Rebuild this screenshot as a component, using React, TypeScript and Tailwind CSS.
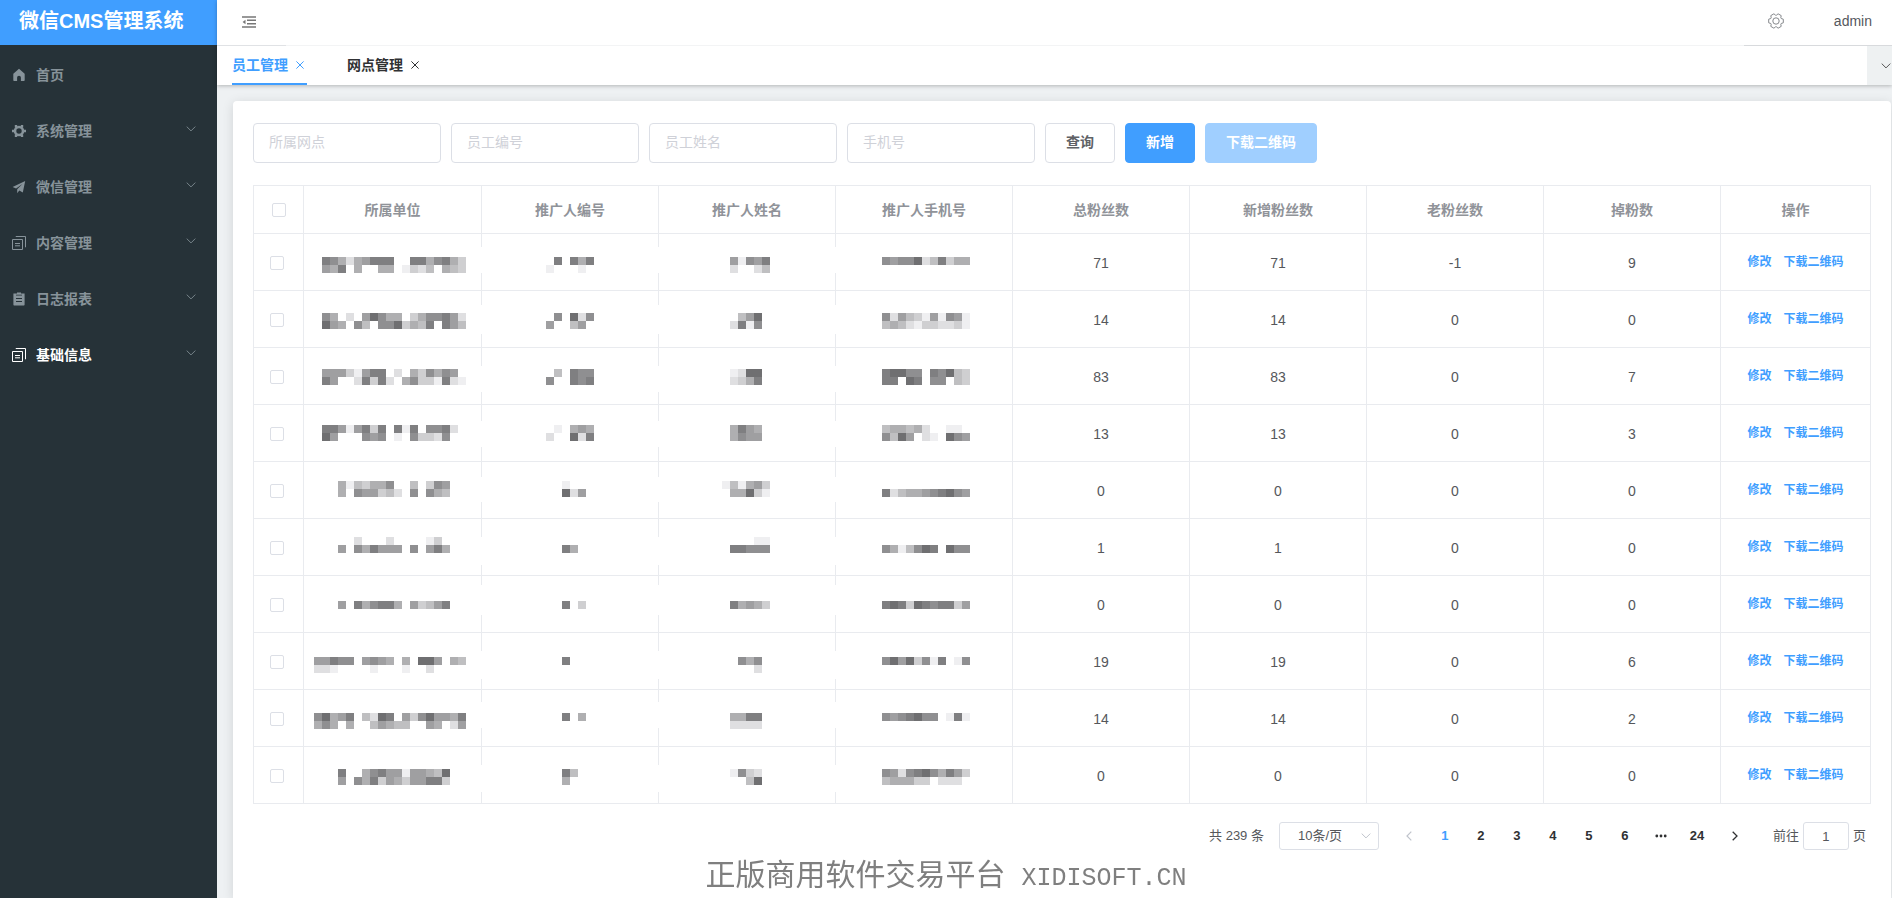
import type { ReactNode } from 'react';

const HomeIcon = () => (
  <svg viewBox="0 0 14 14" className="size-[14px]" fill="currentColor">
    <path d="M7 .8 12.4 5.6c.2.2.3.4.3.6v6.1c0 .5-.4.8-.8.8H8.9V9.6a1.9 1.9 0 0 0-3.8 0v3.5H2.1c-.5 0-.8-.4-.8-.8V6.2c0-.2.1-.4.3-.6z" />
  </svg>
);

const GearIcon = () => (
  <svg viewBox="0 0 14 14" className="size-[14px]" fill="none" stroke="currentColor">
    <circle cx="7" cy="7" r="4" strokeWidth="2.6" />
    <path
      d="M4 1v2.4M10 1v2.4M4 10.6V13M10 10.6V13M0 7h2.4M11.6 7H14"
      strokeWidth="2.4"
    />
  </svg>
);

const SendIcon = () => (
  <svg viewBox="0 0 14 14" className="size-[14px]" fill="currentColor">
    <path d="M13.2 1 .6 7l3.5 1.5L10.4 4 5.2 9.2v4l2.1-2.6 3.5 1.8z" />
  </svg>
);

const CopyIcon = () => (
  <svg viewBox="0 0 14 14" className="size-[14px]" fill="none" stroke="currentColor">
    <path d="M.5 3.5h10v10H.5zM4 1V.5h9.5V11H13M3 7.5h5M3 9.8h5" />
  </svg>
);

const OrderIcon = () => (
  <svg viewBox="0 0 14 14" className="size-[14px]" fill="currentColor">
    <path
      fillRule="evenodd"
      d="M5 .4h4v1.1h3.6v11.3c0 .4-.3.7-.7.7H2.1c-.4 0-.7-.3-.7-.7V1.5H5zM4 2.7v.9h6v-.9zM4 6v.9h6V6zm0 3.1v.9h6v-.9z"
    />
  </svg>
);

const FoldIcon = () => (
  <svg viewBox="0 0 14 12" className="h-3 w-[14px]" fill="none" stroke="currentColor">
    <path d="M0 1h14M5 4.3h9M5 7.7h9M0 11h14" strokeWidth="1.6" />
    <path d="M3.5 3.8v4.4L.6 6z" fill="currentColor" stroke="none" />
  </svg>
);

const SettingIcon = () => (
  <svg viewBox="0 0 16 16" className="size-4" fill="none" stroke="currentColor">
    <circle cx="8" cy="8" r="3.2" />
    <path
      d="M15.3 9.8 13.2 10.5 12.8 11.2 13.2 13.4 10.1 15.2 8.4 13.8H7.6L5.9 15.2 2.8 13.4 3.2 11.2 2.8 10.5.7 9.8V6.2L2.8 5.5 3.2 4.8 2.8 2.6 5.9.8 7.6 2.2H8.4L10.1.8 13.2 2.6 12.8 4.8 13.2 5.5 15.3 6.2z"
      strokeLinejoin="round"
    />
  </svg>
);

const ChevronDown = () => (
  <svg viewBox="0 0 10 6" className="h-[6px] w-[10px]" fill="none" stroke="currentColor">
    <path d="m.7.6 4.3 4.3L9.3.6" />
  </svg>
);

const CloseIcon = () => (
  <svg viewBox="0 0 8 8" className="size-2" fill="none" stroke="currentColor">
    <path d="m.4.4 7.2 7.2M7.6.4.4 7.6" />
  </svg>
);

type MenuItem = { label: string; icon: ReactNode; children?: boolean; active?: boolean };

const menu: MenuItem[] = [
  { label: '首页', icon: <HomeIcon /> },
  { label: '系统管理', icon: <GearIcon />, children: true },
  { label: '微信管理', icon: <SendIcon />, children: true },
  { label: '内容管理', icon: <CopyIcon />, children: true },
  { label: '日志报表', icon: <OrderIcon />, children: true },
  { label: '基础信息', icon: <CopyIcon />, children: true, active: true },
];

const filters = ['所属网点', '员工编号', '员工姓名', '手机号'];

const columns = [
  '所属单位',
  '推广人编号',
  '推广人姓名',
  '推广人手机号',
  '总粉丝数',
  '新增粉丝数',
  '老粉丝数',
  '掉粉数',
];

// left edge of the masked block inside each private column
const maskLeft = [10, 64, 63, 46];

// masks: two strips per private column, one digit per 8px block, 0 = empty, 9 = darkest
// gap: where the column line is wiped out, [top, height]
type Row = { top: number; gap: [number, number]; masks: [string, string][]; values: number[] };

const rows: Row[] = [
  {
    top: 23,
    gap: [13, 26],
    masks: [
      ['0875256888008857853', '0658050055013240543'],
      ['080858', '100010'],
      ['061768', '020024'],
      ['76779248355', ''],
    ],
    values: [71, 71, -1, 9],
  },
  {
    top: 22,
    gap: [14, 29],
    masks: [
      ['0750206975503577862', '0965074077935480864'],
      ['070927', '600460'],
      ['004690', '028170'],
      ['72643161761', '45421332231'],
    ],
    values: [14, 14, 0, 0],
  },
  {
    top: 21,
    gap: [18, 26],
    masks: [
      ['0666316880205375760', '0860028382057331821'],
      ['040877', '700878'],
      ['012990', '023580'],
      ['89977087943', '88098077043'],
    ],
    values: [83, 83, 0, 7],
  },
  {
    top: 20,
    gap: [16, 26],
    masks: [
      ['0886168380818077820', '0960007670107332700'],
      ['010565', '200928'],
      ['058650', '057660'],
      ['45545200110', '74960210976'],
    ],
    values: [13, 13, 0, 3],
  },
  {
    top: 19,
    gap: [15, 25],
    masks: [
      ['0005143557004037600', '0005076634207075400'],
      ['001000', '009260'],
      ['141563', '055931'],
      ['', '82455678976'],
    ],
    values: [0, 0, 0, 0],
  },
  {
    top: 18,
    gap: [18, 28],
    masks: [
      ['0000020002000013000', '0006075866607068500'],
      ['', '008500'],
      ['000011', '088777'],
      ['', '75147980977'],
    ],
    values: [1, 1, 0, 0],
  },
  {
    top: 25,
    gap: [9, 30],
    masks: [
      ['0006085788506346800', ''],
      ['008030', ''],
      ['085653', ''],
      ['89839878836', ''],
    ],
    values: [0, 0, 0, 0],
  },
  {
    top: 24,
    gap: [18, 28],
    masks: [
      ['6687706765050996054', '2210000100010020000'],
      ['008000', ''],
      ['007570', '000020'],
      ['79693718017', ''],
    ],
    values: [19, 19, 0, 6],
  },
  {
    top: 23,
    gap: [12, 26],
    masks: [
      ['7956804298063796658', '5750500465440065026'],
      ['008050', ''],
      ['055880', '022220'],
      ['76789770181', ''],
    ],
    values: [14, 14, 0, 2],
  },
  {
    top: 22,
    gap: [18, 27],
    masks: [
      ['0008005786616654900', '0006075836536688300'],
      ['008400', '005000'],
      ['017320', '000490'],
      ['76278975863', '45553302220'],
    ],
    values: [0, 0, 0, 0],
  },
];

const Mosaic = ({ row, col }: { row: Row; col: number }) => (
  <svg
    className="block h-14 w-44 overflow-visible"
    shapeRendering="crispEdges"
    aria-hidden="true"
  >
    {row.masks[col].map((strip, line) =>
      strip.split('').map((level, i) =>
        level === '0' ? null : (
          <rect
            key={`${line}-${i}`}
            x={maskLeft[col] + i * 8}
            y={row.top + line * 8}
            width="8"
            height="8"
            fill={`rgb(${255 - Number(level) * 16} ${255 - Number(level) * 16} ${257 - Number(level) * 16})`}
          />
        ),
      ),
    )}
    {col < 3 && <rect x="175" y={row.gap[0]} width="4" height={row.gap[1]} fill="#fff" />}
  </svg>
);

const Sidebar = () => (
  <aside className="w-[217px] shrink-0 bg-[#263238]">
    <h1 className="flex h-[45px] items-center bg-[#409eff] pb-[3px] pl-[19px] text-xl font-bold text-white">
      微信CMS管理系统
    </h1>
    <nav className="pt-[2px]">
      {menu.map((item) => (
        <a
          key={item.label}
          href="#"
          className={`flex h-14 items-center gap-[10px] pr-[21px] pl-3 text-sm font-bold ${
            item.active ? 'text-white' : 'text-[#87939a]'
          }`}
        >
          {item.icon}
          <span className="flex-1">{item.label}</span>
          {item.children && (
            <span className="pb-1 text-[#77848a]">
              <ChevronDown />
            </span>
          )}
        </a>
      ))}
    </nav>
  </aside>
);

const Header = () => (
  <header className="relative z-10 bg-white shadow-[0_1px_4px_rgba(0,0,0,0.25)]">
    <div className="flex h-[46px] justify-between border-b border-[#f3f4f5]">
      <div className="-mb-px flex w-[69px] items-center border-b border-[#e0e2e5] pb-[2px] pl-[25px] text-[#777]">
        <button type="button" aria-label="折叠菜单">
          <FoldIcon />
        </button>
      </div>
      <div className="-mb-px flex w-[148px] items-center justify-between border-b border-[#d8dadd] pr-5 pb-[3px] pl-6 text-sm text-[#55585e]">
        <button type="button" aria-label="设置" className="text-[#85888c]">
          <SettingIcon />
        </button>
        <span>admin</span>
      </div>
    </div>
    {/* Opened pages */}
    <div className="flex h-[39px] justify-between">
      <div className="flex gap-10 pl-[15px] text-sm font-bold">
        <div className="flex items-center gap-2 border-b-2 border-[#409eff] pr-[3px] text-[#409eff]">
          <a href="#">员工管理</a>
          <button type="button" aria-label="关闭员工管理">
            <CloseIcon />
          </button>
        </div>
        <div className="flex items-center gap-2 border-b-2 border-transparent text-[#303133]">
          <a href="#">网点管理</a>
          <button type="button" aria-label="关闭网点管理">
            <CloseIcon />
          </button>
        </div>
      </div>
      <button
        type="button"
        aria-label="更多"
        className="flex w-[25px] items-center overflow-hidden bg-[#eef1f2] pl-[14px] text-[#555]"
      >
        <span className="shrink-0">
          <ChevronDown />
        </span>
      </button>
    </div>
  </header>
);

const checkboxClass =
  'block mx-auto size-[14px] appearance-none rounded-xs border border-[#dcdfe6] bg-white checked:bg-[#409eff]';

const StaffTable = () => (
  <table className="mt-[22px] w-full table-fixed border-separate border-spacing-0 border-t border-l border-[#e9ebef] text-center text-sm text-[#606266]">
    <thead>
      <tr className="h-12 text-[#909399]">
        <th className="w-[50px] border-r border-b border-[#e9ebef]">
          <input type="checkbox" aria-label="全选" className={checkboxClass} />
        </th>
        {columns.map((column) => (
          <th
            key={column}
            className="border-r border-b border-[#e9ebef] font-bold nth-2:w-[178px]"
          >
            {column}
          </th>
        ))}
        <th className="w-[150px] border-r border-b border-[#e9ebef] font-bold">操作</th>
      </tr>
    </thead>
    <tbody>
      {rows.map((row, index) => (
        <tr key={index} className="h-[57px]">
          <td className="border-r border-b border-[#e9ebef] pt-[2px] pr-1">
            <input type="checkbox" aria-label={`选择第${index + 1}行`} className={checkboxClass} />
          </td>
          {row.masks.map((_, col) => (
            <td key={col} className="border-r border-b border-[#e9ebef]">
              <Mosaic row={row} col={col} />
            </td>
          ))}
          {row.values.map((value, col) => (
            <td key={col} className="border-r border-b border-[#e9ebef] pt-[2px] text-[#55575b]">
              {value}
            </td>
          ))}
          <td className="border-r border-b border-[#e9ebef]">
            <div className="flex justify-center gap-3 text-xs font-bold text-[#409eff]">
              <button type="button">修改</button>
              <button type="button">下载二维码</button>
            </div>
          </td>
        </tr>
      ))}
    </tbody>
  </table>
);

const Pagination = () => (
  <div className="mt-[18px] flex h-7 items-center justify-end pr-[5px] text-[13px] text-[#55575b]">
    <span>共 239 条</span>
    <div className="relative ml-[15px]">
      <select
        aria-label="每页条数"
        className="h-7 w-[100px] appearance-none rounded-[3px] border border-[#dcdfe6] bg-white pl-[18px]"
      >
        <option>10条/页</option>
      </select>
      <span className="pointer-events-none absolute top-[11px] right-2 text-[#c0c4cc]">
        <ChevronDown />
      </span>
    </div>
    <div className="ml-3 flex items-center font-bold text-[#303133]">
      <button type="button" aria-label="上一页" className="flex w-9 justify-center text-[#c0c4cc]">
        <svg viewBox="0 0 6 10" className="h-[10px] w-[6px]" fill="none" stroke="currentColor">
          <path d="M5.3.7 1 5l4.3 4.3" strokeWidth="1.2" />
        </svg>
      </button>
      <button type="button" className="w-9 text-[#409eff]">
        1
      </button>
      {[2, 3, 4, 5, 6].map((page) => (
        <button key={page} type="button" className="w-9">
          {page}
        </button>
      ))}
      <button type="button" aria-label="向后 5 页" className="flex w-9 justify-center">
        <svg viewBox="0 0 12 4" className="h-1 w-3" fill="currentColor">
          <circle cx="1.8" cy="2" r="1.4" />
          <circle cx="6" cy="2" r="1.4" />
          <circle cx="10.2" cy="2" r="1.4" />
        </svg>
      </button>
      <button type="button" className="w-9">
        24
      </button>
      <button type="button" aria-label="下一页" className="flex w-10 justify-center">
        <svg viewBox="0 0 6 10" className="h-[10px] w-[6px]" fill="none" stroke="currentColor">
          <path d="M.7.7 5 5 .7 9.3" strokeWidth="1.3" />
        </svg>
      </button>
    </div>
    <label className="ml-[18px] flex items-center gap-1">
      前往
      <input
        type="text"
        defaultValue="1"
        className="h-7 w-[46px] rounded-[3px] border border-[#dcdfe6] text-center"
      />
      页
    </label>
  </div>
);

const App = () => {
  return (
    <div className="flex min-h-screen bg-[#eef1f3] font-['Liberation_Sans','Noto_Sans_CJK_SC',sans-serif]">
      <Sidebar />
      <div className="flex min-w-0 flex-1 flex-col">
        <Header />
        <main className="flex flex-1 flex-col pt-4 pr-px pl-4">
          <section className="flex-1 rounded-t bg-white px-5 pt-[22px] shadow-[0_2px_12px_rgba(0,0,0,0.12)]">
            {/* Search form */}
            <form className="flex gap-[10px] text-sm font-bold">
              {filters.map((filter) => (
                <input
                  key={filter}
                  type="text"
                  aria-label={filter}
                  placeholder={filter}
                  className="h-10 w-[188px] rounded border border-[#dcdfe6] px-[15px] pb-[2px] font-normal placeholder:text-[#cfd1d8]"
                />
              ))}
              <button
                type="button"
                className="h-10 rounded border border-[#dcdfe6] px-5 pb-[2px] text-[#606266]"
              >
                查询
              </button>
              <button
                type="button"
                className="h-10 rounded border border-[#409eff] bg-[#409eff] px-5 pb-[2px] text-white"
              >
                新增
              </button>
              <button
                type="button"
                disabled
                className="h-10 rounded border border-[#a0cfff] bg-[#a0cfff] px-5 pb-[2px] text-white"
              >
                下载二维码
              </button>
            </form>
            <StaffTable />
            <Pagination />
          </section>
        </main>
      </div>
      {/* Watermark */}
      <p className="pointer-events-none fixed inset-x-0 bottom-0 z-20 text-center text-[30px] leading-[38px] font-normal whitespace-pre text-[#7f7f7f]">
        正版商用软件交易平台
        <span className="ml-4 font-['Liberation_Mono',monospace] text-[25px]">XIDISOFT.CN</span>
      </p>
    </div>
  );
};

export default App;
